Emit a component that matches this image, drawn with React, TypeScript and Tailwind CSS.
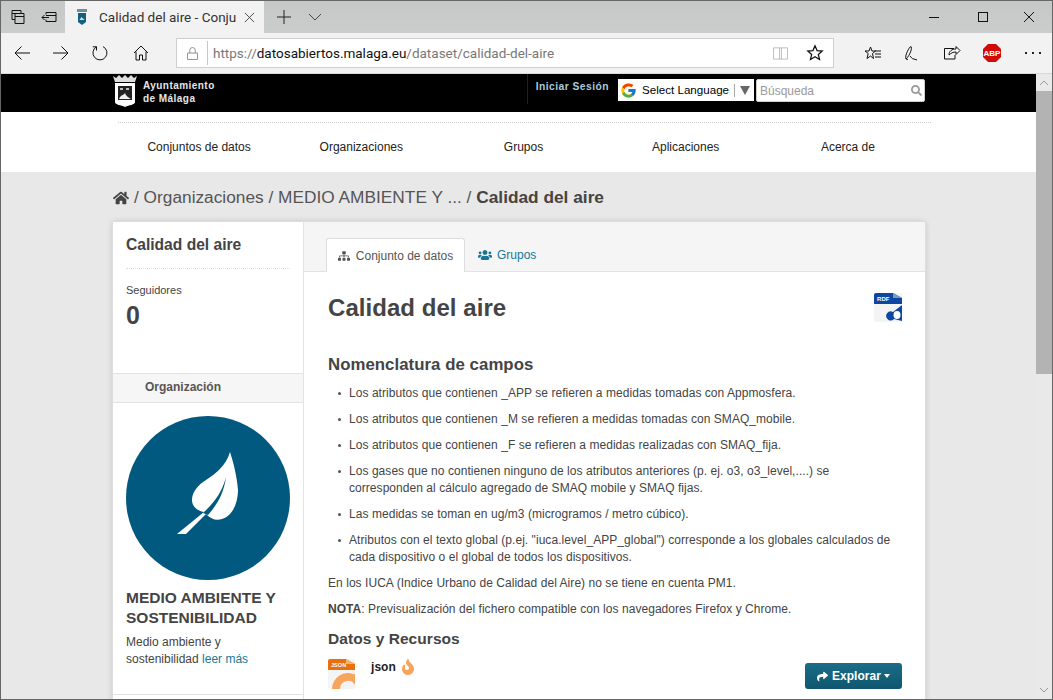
import { ReactNode } from "react";
import { FaFire, FaHome, FaSearch, FaShare, FaSitemap, FaUsers } from "react-icons/fa";
import { FcGoogle } from "react-icons/fc";

const navItems = ["Conjuntos de datos", "Organizaciones", "Grupos", "Aplicaciones", "Acerca de"];

function ChromeIcon({ children, className = "h-5 w-5" }: { children: ReactNode; className?: string }) {
  return (
    <svg viewBox="0 0 20 20" fill="none" stroke="currentColor" strokeWidth="1" className={`text-[#111] ${className}`}>
      {children}
    </svg>
  );
}

function TabBar() {
  return (
    <div className="flex h-[32px] items-stretch bg-[linear-gradient(#c6c7c7,#cbcccc)]">
      <div className="flex w-[32px] items-center justify-center pl-[1px]">
        <ChromeIcon>
          <path d="M4 3.500h9v3M4 3.500v9h3M4 6.500h9M7 6.500h9v10H7zM7 9.500h9" />
        </ChromeIcon>
      </div>
      <div className="flex w-[32px] items-center justify-center">
        <ChromeIcon>
          <path d="M7 5.500h10v9H7v-2M7 5.500v2M7 8.500h10M10 10.500H3M5.500 8l-2.500 2.500L5.500 13" />
        </ChromeIcon>
      </div>
      <div className="flex w-[199px] items-center bg-[#f2f2f2] pl-[12px]">
        <svg viewBox="0 0 10 16" className="h-[16px] w-[10px]">
          <path d="M0 0h10v3H0z" fill="#6f8f9d" />
          <path d="M1 4h8v9l-4 3-4-3z" fill="#14617f" />
          <path d="M2.500 11l2-3 3 3z" fill="#cfe0e8" />
        </svg>
        <span className="ml-[12px] text-[13.500px] whitespace-nowrap text-[#333] font-['Roboto',sans-serif]">
          Calidad del aire - Conju
        </span>
        <svg viewBox="0 0 12 12" className="ml-auto mr-[9px] h-[11px] w-[11px] shrink-0 text-[#444]" fill="none" stroke="currentColor">
          <path d="M1 1l10 10M11 1L1 11" />
        </svg>
      </div>
      <div className="flex w-[40px] items-center justify-center">
        <svg viewBox="0 0 14 14" className="h-[14px] w-[14px] text-[#222]" fill="none" stroke="currentColor">
          <path d="M7 0v14M0 7h14" />
        </svg>
      </div>
      <div className="flex w-[22px] items-center justify-center">
        <svg viewBox="0 0 14 8" className="h-[8px] w-[14px] text-[#444]" fill="none" stroke="currentColor">
          <path d="M1 1l6 6 6-6" />
        </svg>
      </div>
      <div className="ml-auto flex items-center">
        <div className="mr-[3px] flex w-[46px] justify-center">
          <span className="block h-[1px] w-[10px] bg-[#111]" />
        </div>
        <div className="flex w-[46px] justify-center">
          <span className="block h-[10px] w-[10px] border border-[#111]" />
        </div>
        <div className="flex w-[46px] justify-center">
          <svg viewBox="0 0 10 10" className="h-[10px] w-[10px] text-[#111]" fill="none" stroke="currentColor">
            <path d="M0 0l10 10M10 0L0 10" />
          </svg>
        </div>
      </div>
    </div>
  );
}

function Toolbar() {
  return (
    <div className="flex h-[41px] items-center border-b border-[#d9d9d9] bg-[#f2f2f2]">
      <div className="flex items-center gap-[19px] pl-[11px]">
        <ChromeIcon>
          <path d="M18 10H3M9.500 3.500L3 10l6.500 6.500" />
        </ChromeIcon>
        <ChromeIcon>
          <path d="M2 10h15M10.500 3.500L17 10l-6.500 6.500" />
        </ChromeIcon>
        <ChromeIcon>
          <path d="M6.500 3.800A7 7 0 1 0 13 3.600M6.500 3.800H2.800M6.500 3.800V7.500" />
        </ChromeIcon>
        <ChromeIcon className="ml-[2px] h-5 w-5">
          <path d="M3 10l7-7 7 7M5 8.500V17h3.500v-5h3v5H15V8.500" />
        </ChromeIcon>
      </div>
      <div className="ml-[25px] flex h-[30px] w-[658px] items-center border border-[#cfcfcf] bg-white">
        <svg viewBox="0 0 12 14" className="ml-[10px] h-[13px] w-[11px] text-[#888]" fill="none" stroke="currentColor">
          <path d="M.5 6.500h11v7H.5zM3 6.500V3.500a3 3 0 0 1 6 0v3" />
        </svg>
        <span className="ml-[9px] h-[24px] w-[1px] bg-[#c8c8c8]" />
        <span className="ml-[5px] text-[13.500px] text-[#777] font-['Roboto',sans-serif]">
          https://<span className="text-[#111]">datosabiertos.malaga.eu</span>/dataset/calidad-del-aire
        </span>
        <div className="ml-auto flex items-center">
          <svg viewBox="0 0 16 14" className="h-[14px] w-[15px] text-[#bbb]" fill="none" stroke="currentColor">
            <path d="M.5 1.500h15v12H.5zM7 1.500v12M9 1.500v12" />
          </svg>
          <ChromeIcon className="mr-[9px] ml-[18px] h-[18px] w-[18px]">
            <path d="M10 2l2.300 5.300 5.700.5-4.300 3.800 1.300 5.600-5-3-5 3 1.300-5.600L2 7.800l5.700-.5z" strokeWidth="1.400" />
          </ChromeIcon>
        </div>
      </div>
      <div className="ml-[29px] flex items-center gap-[19px]">
        <ChromeIcon>
          <path d="M7.500 4l1.500 4h3.500l-3 2.500 1 5-3-2.500-3.500 2.500 1.200-5L2 8h4zM12 8h6M12 11h6M12 14h6" />
        </ChromeIcon>
        <ChromeIcon>
          <path d="M4 16c-1.500-3 3-12 5-12.500 1.500 1-1 9-5 12.500zM4 16l2 .5M8 13c1.500 1 1.500 3 4 3l3 1" />
        </ChromeIcon>
        <ChromeIcon>
          <path d="M13 5.500H3.500V16H14v-4M8 12c0-4 3-6 7-6V3.500l4 4-4 4V9c-3 0-5 1-7 3z" />
        </ChromeIcon>
        <svg viewBox="0 0 20 20" className="ml-[2px] h-[20px] w-[20px]">
          <path d="M6 1h8l5 5v8l-5 5H6l-5-5V6z" fill="#d10a0a" />
          <text x="10" y="13" textAnchor="middle" fontSize="8" fontWeight="700" fill="#fff" fontFamily="Liberation Sans">
            ABP
          </text>
        </svg>
        <div className="ml-[4px] flex gap-[5px]">
          <span className="h-[2px] w-[2px] bg-[#222]" />
          <span className="h-[2px] w-[2px] bg-[#222]" />
          <span className="h-[2px] w-[2px] bg-[#222]" />
        </div>
      </div>
    </div>
  );
}

function CityLogo() {
  return (
    <svg viewBox="0 0 24 34" className="h-[34px] w-[24px]">
      <path d="M0 2l3 2 3-3 3 3 3-3 3 3 3-3 3 3 3-2-2 6H2z" fill="#ddd" />
      <path d="M2 9h20v19c0 3-6 3-10 5-4-2-10-2-10-5z" fill="#fff" />
      <path d="M5 12h14v14H5z" fill="#222" />
      <path d="M6 25c2-5 4-3 6-6 1 3 3 4 6 6z" fill="#eee" />
      <path d="M7 14h3v2H7zM13 14h3v2h-3z" fill="#bbb" />
    </svg>
  );
}

function TopBar() {
  return (
    <div className="flex h-[38px] items-start bg-black">
      <div className="flex w-[1035px] items-start pl-[112px]">
        <CityLogo />
        <div className="mt-[5px] ml-[6px] text-[10px] leading-[13px] font-bold tracking-[.45px] text-[#e6e6e6]">
          <div>Ayuntamiento</div>
          <div>de Málaga</div>
        </div>
        <div className="ml-auto flex items-start pr-[111px]">
          <span className="h-[30px] w-[1px] bg-[#12262b]" />
          <span className="mt-[7px] ml-[8px] text-[10.300px] leading-[12px] font-bold tracking-[.45px] text-[#a9cbdc]">
            Iniciar Sesión
          </span>
          <div className="mt-[5px] ml-[9px] flex h-[22px] w-[136px] items-center bg-white pl-[2px]">
            <FcGoogle className="h-[17px] w-[17px]" />
            <span className="ml-[5px] text-[11.600px] text-black">Select Language</span>
            <span className="ml-[5px] h-[13px] w-[1px] bg-[#aaa]" />
            <span className="ml-[5px] border-x-[5px] border-t-[9px] border-x-transparent border-t-[#666]" />
          </div>
          <div className="mt-[5px] ml-[2px] flex h-[23px] w-[169px] items-center rounded-[2px] border border-[#ccc] bg-white pr-[2px] pl-[3px]">
            <span className="text-[12px] text-[#9a9a9a]">Búsqueda</span>
            <FaSearch className="ml-auto h-[11px] w-[11px] text-[#999]" />
          </div>
        </div>
      </div>
    </div>
  );
}

function MainNav() {
  return (
    <div className="h-[60px] bg-white pt-[10px] pl-[117px]">
      <div className="grid h-[50px] w-[813px] grid-cols-5 items-center border-t border-dotted border-[#ccc] pr-[2px] pb-[2px]">
        {navItems.map((item) => (
          <span key={item} className="text-center text-[12px] text-[#222]">
            {item}
          </span>
        ))}
      </div>
    </div>
  );
}

function Sidebar() {
  return (
    <aside className="w-[191px] shrink-0 border-r border-[#e3e3e3] bg-white">
      <div className="px-[13px] pt-[13px]">
        <h2 className="border-b border-dotted border-[#ddd] pb-[13px] text-[15.600px] leading-[20px] font-bold text-[#444]">
          Calidad del aire
        </h2>
        <div className="mt-[13px] text-[11px] leading-[16px] text-[#444]">Seguidores</div>
        <div className="mt-[3px] h-[62px] text-[25px] leading-[28px] font-bold text-[#444]">0</div>
      </div>
      <div className="mt-[10px] h-[30px] border-y border-[#e3e3e3] bg-[#f6f6f6] pl-[32px] text-[12px] leading-[27px] font-bold text-[#555]">
        Organización
      </div>
      <div className="px-[13px] pt-[13px]">
        <div className="flex h-[164px] w-[164px] items-center justify-center rounded-full bg-[#01597f]">
          <svg viewBox="0 0 72 86" className="mr-[4px] mb-[10px] h-[86px] w-[72px]">
            <path
              d="M60 2c3 9 7 24 8 38 0 14-6 26-16 29-6 2-11 0-16-5L16 84H7l27-22c-7-1-12-6-12-12 0-8 6-15 14-20 11-7 20-15 24-28z"
              fill="#fff"
            />
            <path d="M33 63C45 52 52 42 56 27c-2 15-8 27-18 38z" fill="#01597f" />
          </svg>
        </div>
        <h3 className="mt-[8px] text-[15.500px] leading-[20px] font-bold text-[#444]">MEDIO AMBIENTE Y SOSTENIBILIDAD</h3>
        <p className="mt-[6px] text-[12px] leading-[17px] text-[#444]">
          Medio ambiente y sostenibilidad <span className="text-[#187794]">leer más</span>
        </p>
      </div>
      <div className="mt-[26px] border-t border-[#e3e3e3]" />
    </aside>
  );
}

function RdfIcon() {
  return (
    <svg viewBox="0 0 28 29" className="h-[29px] w-[28px]">
      <rect width="28" height="29" rx="2" fill="#f4f4f4" />
      <path d="M0 2a2 2 0 0 1 2-2h17l9 5v6H0z" fill="#0d47a1" />
      <path d="M19 0l9 5h-9z" fill="#7d99c6" />
      <text x="3" y="7.500" fontSize="6" fontWeight="700" fill="#fff" fontFamily="Liberation Sans">
        RDF
      </text>
      <path d="M28 12l-9 7a4.500 4.500 0 1 0 1 7l8 2z" fill="#0d47a1" />
      <ellipse cx="23" cy="22" rx="3.500" ry="4" fill="#fff" />
    </svg>
  );
}

function JsonIcon() {
  return (
    <svg viewBox="0 0 27 30" className="h-[30px] w-[27px]">
      <rect width="27" height="30" rx="2" fill="#f4f4f4" />
      <path d="M0 2a2 2 0 0 1 2-2h16l9 5v6H0z" fill="#e8710a" />
      <path d="M18 0l9 5h-9z" fill="#f3b27a" />
      <text x="3" y="7.500" fontSize="5.500" fontWeight="700" fill="#fff" fontFamily="Liberation Sans">
        JSON
      </text>
      <path d="M4 30A16 16 0 0 1 27 15.600V26A8 8 0 0 0 12 30z" fill="#f7a45c" />
    </svg>
  );
}

const bullets = [
  "Los atributos que contienen _APP se refieren a medidas tomadas con Appmosfera.",
  "Los atributos que contienen _M se refieren a medidas tomadas con SMAQ_mobile.",
  "Los atributos que contienen _F se refieren a medidas realizadas con SMAQ_fija.",
  "Los gases que no contienen ninguno de los atributos anteriores (p. ej. o3, o3_level,....) se corresponden al cálculo agregado de SMAQ mobile y SMAQ fijas.",
  "Las medidas se toman en ug/m3 (microgramos / metro cúbico).",
  'Atributos con el texto global (p.ej. "iuca.level_APP_global") corresponde a los globales calculados de cada dispositivo o el global de todos los dispositivos.',
];

function Article() {
  return (
    <main className="min-w-0 flex-1 bg-white">
      <div className="flex h-[50px] items-end border-b border-[#e3e3e3] bg-[#f5f5f5] pl-[22px]">
        <div className="-mb-px flex h-[34px] w-[139px] items-center justify-center rounded-t-[3px] border border-b-0 border-[#ddd] bg-white text-[12px] text-[#555]">
          <FaSitemap className="mr-[6px] h-[12px] w-[12px]" />
          Conjunto de datos
        </div>
        <div className="flex h-[33px] items-center pl-[13px] text-[12px] text-[#187794]">
          <FaUsers className="mr-[5px] h-[14px] w-[14px]" />
          Grupos
        </div>
      </div>
      <div className="pr-[23px] pl-[24px] tracking-[.05px]">
        <div className="flex items-start justify-between pt-[21px]">
          <h1 className="text-[24px] leading-[30px] font-bold text-[#444]">Calidad del aire</h1>
          <RdfIcon />
        </div>
        <h2 className="mt-[32px] text-[16.800px] leading-[20px] font-bold text-[#444]">Nomenclatura de campos</h2>
        <ul className="mt-[10px] pl-[21px] text-[12px] leading-[17px] text-[#444]">
          {bullets.map((b) => (
            <li key={b} className="relative mb-[9px]">
              <span className="absolute top-[7px] -left-[11px] h-[3px] w-[3px] rounded-full bg-[#555]" />
              {b}
            </li>
          ))}
        </ul>
        <p className="text-[12px] leading-[17px] text-[#444]">En los IUCA (Indice Urbano de Calidad del Aire) no se tiene en cuenta PM1.</p>
        <p className="mt-[9px] text-[12px] leading-[17px] text-[#444]">
          <b>NOTA</b>: Previsualización del fichero compatible con los navegadores Firefox y Chrome.
        </p>
        <h2 className="mt-[11px] text-[15.500px] leading-[20px] font-bold text-[#444]">Datos y Recursos</h2>
        <div className="mt-[10px] flex items-start">
          <JsonIcon />
          <span className="ml-[16px] text-[12px] leading-[16px] font-bold text-[#222]">json</span>
          <FaFire className="ml-[6px] h-[16px] w-[12px] text-[#f7a45c]" />
          <div className="mt-[4px] ml-auto flex h-[26px] w-[97px] items-center justify-center rounded-[3px] bg-[linear-gradient(#1b6d88,#0f566e)] text-[12px] font-bold text-white">
            <FaShare className="mr-[4px] h-[11px] w-[11px]" />
            Explorar
            <span className="ml-[3px] border-x-[3px] border-t-[4px] border-x-transparent border-t-white" />
          </div>
        </div>
      </div>
    </main>
  );
}

function Scrollbar() {
  return (
    <div className="relative w-[16px] shrink-0 bg-[#e9e9e9]">
      <svg viewBox="0 0 10 6" className="absolute top-[6px] left-[3px] h-[6px] w-[10px] text-[#999]" fill="none" stroke="currentColor">
        <path d="M1 5l4-4 4 4" />
      </svg>
      <div className="mt-[17px] h-[283px] bg-[#b3b3b3]" />
      <svg viewBox="0 0 10 6" className="absolute bottom-[6px] left-[3px] h-[6px] w-[10px] text-[#999]" fill="none" stroke="currentColor">
        <path d="M1 1l4 4 4-4" />
      </svg>
    </div>
  );
}

export default function App() {
  return (
    <div className="flex h-[700px] w-[1053px] flex-col overflow-hidden border border-[#666] font-['Liberation_Sans',Arial,sans-serif]">
      <TabBar />
      <Toolbar />
      <div className="flex min-h-0 flex-1">
        <div className="min-w-0 flex-1 overflow-hidden bg-[#e8e8e8]">
          <TopBar />
          <MainNav />
          <div className="pl-[112px]">
            <div className="flex h-[50px] items-center pt-[1px] whitespace-nowrap text-[17.300px] text-[#555]">
              <FaHome className="mr-[5px] h-[16px] w-[16px] text-[#444]" />/ Organizaciones / MEDIO AMBIENTE Y ... /&nbsp;
              <b className="text-[#444]">Calidad del aire</b>
            </div>
            <div className="flex min-h-[600px] w-[812px] rounded-t-[3px] shadow-[0_0_0_1px_#ddd,0_0_6px_rgba(0,0,0,.2)]">
              <Sidebar />
              <Article />
            </div>
          </div>
        </div>
        <Scrollbar />
      </div>
    </div>
  );
}
